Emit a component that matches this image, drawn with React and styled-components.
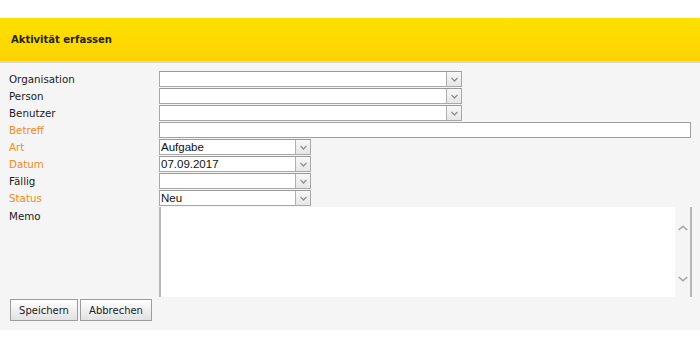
import React from "react";
import styled, { createGlobalStyle } from "styled-components";

const Global = createGlobalStyle`
  html, body { margin: 0; padding: 0; background: #fff; }
  body { font-family: "DejaVu Sans", Verdana, sans-serif; }
`;

const Page = styled.div`
  padding-top: 18px;
  width: 700px;
`;

const Header = styled.div`
  height: 43px;
  background: linear-gradient(#ffe100, #fdd300);
  border-bottom: 2px solid #d6d6d6;
  display: flex;
  align-items: center;
  padding-left: 11px;
  box-sizing: content-box;
`;

const Title = styled.h1`
  margin: 0;
  font-size: 10px;
  font-weight: bold;
  color: #222;
  font-family: "DejaVu Sans", Verdana, sans-serif;
`;

const Body = styled.div`
  background: #f5f5f5;
  padding: 8px 9px 9px 9px;
`;

const Form = styled.div`
  display: grid;
  grid-template-columns: 150px 1fr;
  row-gap: 1px;
`;

const Label = styled.div`
  font-size: 10.3px;
  color: ${(p) => (p.$req ? "#f48a1a" : "#1a1a1a")};
  display: flex;
  align-items: ${(p) => (p.$top ? "flex-start" : "center")};
  padding-top: ${(p) => (p.$top ? "3px" : "0")};
  height: ${(p) => (p.$top ? "auto" : "16px")};
`;

const SelectBox = styled.div`
  width: ${(p) => p.$w}px;
  height: 16px;
  box-sizing: border-box;
  border: 1px solid #a8a8a8;
  border-top-color: #9a9a9a;
  background: #fff;
  display: flex;
  align-items: stretch;
`;

const SelectText = styled.div`
  flex: 1;
  font-family: "Liberation Sans", Arial, sans-serif;
  font-size: 11.5px;
  color: #111;
  line-height: 14px;
  padding-left: 1px;
`;

const Arrow = styled.div`
  width: 15px;
  box-sizing: border-box;
  border-left: 1px solid #b0b0b0;
  background: linear-gradient(#f7f7f7, #e6e6e6);
  display: flex;
  align-items: center;
  justify-content: center;
`;

const TextInput = styled.div`
  width: 532px;
  height: 16px;
  box-sizing: border-box;
  border: 1px solid #a0a0a0;
  background: #fff;
`;

const Memo = styled.div`
  width: 533px;
  height: 90px;
  box-sizing: border-box;
  border-left: 2px solid #b8b8b8;
  border-right: 2px solid #b8b8b8;
  display: flex;
`;

const MemoArea = styled.div`
  flex: 1;
  background: #fff;
`;

const Scroll = styled.div`
  width: 15px;
  flex: none;
  background: #f5f5f5;
  display: flex;
  flex-direction: column;
  justify-content: space-between;
  align-items: center;
  padding: 18px 0 15px;
  box-sizing: border-box;
`;

const Buttons = styled.div`
  display: flex;
  gap: 2px;
  margin-top: 2px;
  padding-left: 1px;
`;

const Button = styled.button`
  height: 22px;
  width: ${(p) => p.$w}px;
  padding: 0;
  border: 1px solid #9c9c9c;
  background: linear-gradient(#ffffff, #e2e2e2);
  font-family: "DejaVu Sans", Verdana, sans-serif;
  font-size: 10px;
  color: #222;
  border-radius: 0;
`;

const Chevron = ({ up, color = "#8a8a8a", w = 7, h = 5 }) => (
  <svg width={w} height={h} viewBox="0 0 7 5" preserveAspectRatio="none" style={{ display: "block" }}>
    <path
      d={up ? "M0.5 4.2 L3.5 1 L6.5 4.2" : "M0.5 0.8 L3.5 4 L6.5 0.8"}
      fill="none"
      stroke={color}
      strokeWidth="1.2"
    />
  </svg>
);

const Select = ({ w, value }) => (
  <SelectBox $w={w}>
    <SelectText>{value}</SelectText>
    <Arrow>
      <Chevron />
    </Arrow>
  </SelectBox>
);

export default function App() {
  return (
    <Page>
      <Global />
      <Header>
        <Title>Aktivität erfassen</Title>
      </Header>
      <Body>
        <Form>
          <Label>Organisation</Label>
          <Select w={303} />
          <Label>Person</Label>
          <Select w={303} />
          <Label>Benutzer</Label>
          <Select w={303} />
          <Label $req>Betreff</Label>
          <TextInput />
          <Label $req>Art</Label>
          <Select w={152} value="Aufgabe" />
          <Label $req>Datum</Label>
          <Select w={152} value="07.09.2017" />
          <Label>Fällig</Label>
          <Select w={152} />
          <Label $req>Status</Label>
          <Select w={152} value="Neu" />
          <Label $top>Memo</Label>
          <Memo>
            <MemoArea />
            <Scroll>
              <Chevron up color="#a8a8a8" w={10} h={6} />
              <Chevron color="#a8a8a8" w={10} h={6} />
            </Scroll>
          </Memo>
        </Form>
        <Buttons>
          <Button $w={68}>Speichern</Button>
          <Button $w={72}>Abbrechen</Button>
        </Buttons>
      </Body>
    </Page>
  );
}
